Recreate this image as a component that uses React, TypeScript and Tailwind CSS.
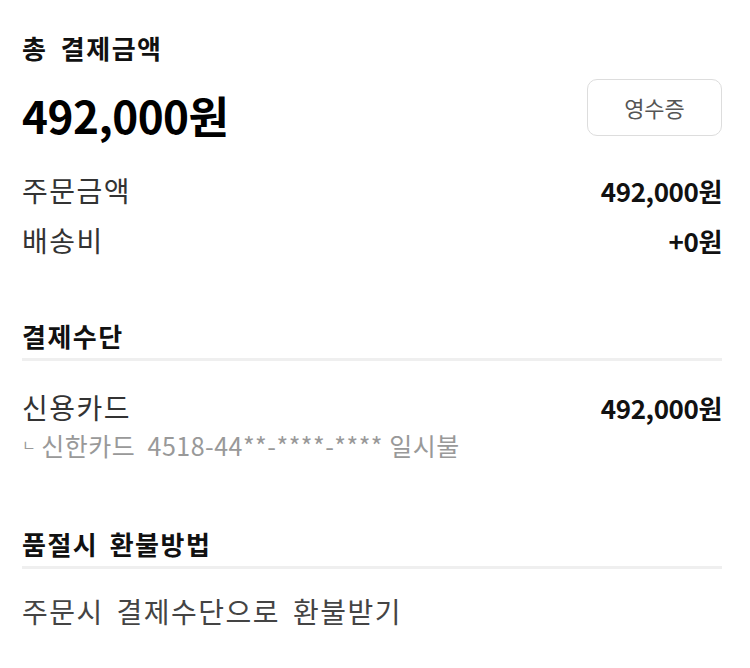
import React from 'react';

const font = { fontFamily: '"Noto Sans CJK KR", "Noto Sans", sans-serif' };

const Row = ({ label, value }: { label: string; value: string }) => (
  <div className="flex items-center justify-between">
    <span className="text-[28px] text-[#333] leading-[50px] tracking-[1.5px]">{label}</span>
    <span className="text-[26px] font-bold text-[#111] tracking-[-0.4px]">{value}</span>
  </div>
);

const SectionTitle = ({ children }: { children: React.ReactNode }) => (
  <div className="border-b-[3px] border-[#efefef] pb-[4px]">
    <h3 className="text-[26px] font-bold text-[#111] leading-[36px] tracking-[1.5px] [word-spacing:4px]">{children}</h3>
  </div>
);

export default function App() {
  return (
    <div className="w-[750px] h-[668px] bg-white pl-[22px] pr-[28px] pt-[30px] overflow-hidden" style={font}>
      <section>
        <h2 className="text-[26px] font-bold text-[#111] leading-[36px] tracking-[1.5px] [word-spacing:6px]">총 결제금액</h2>
        <div className="flex items-start justify-between mt-[13px]">
          <div className="text-[44px] font-bold text-black leading-[60px] mt-[6px] tracking-[-0.5px]">492,000원</div>
          <button className="w-[135px] h-[57px] rounded-[10px] border border-[#dddddd] text-[22px] text-[#555]">
            영수증
          </button>
        </div>
        <div className="mt-[20px]">
          <Row label="주문금액" value="492,000원" />
          <Row label="배송비" value="+0원" />
        </div>
      </section>

      <section className="mt-[53px]">
        <SectionTitle>결제수단</SectionTitle>
        <div className="mt-[21px]">
          <Row label="신용카드" value="492,000원" />
          <p className="text-[25px] text-[#999] leading-[26px] tracking-[0.5px]">
            <span className="text-[15px] align-top mr-[5px]">ㄴ</span>신한카드&nbsp;&nbsp;4518-44**-****-**** 일시불
          </p>
        </div>
      </section>

      <section className="mt-[68px]">
        <SectionTitle>품절시 환불방법</SectionTitle>
        <p className="mt-[22px] text-[28px] text-[#444] leading-[40px] tracking-[1.5px] [word-spacing:5px]">
          주문시 결제수단으로 환불받기
        </p>
      </section>
    </div>
  );
}
